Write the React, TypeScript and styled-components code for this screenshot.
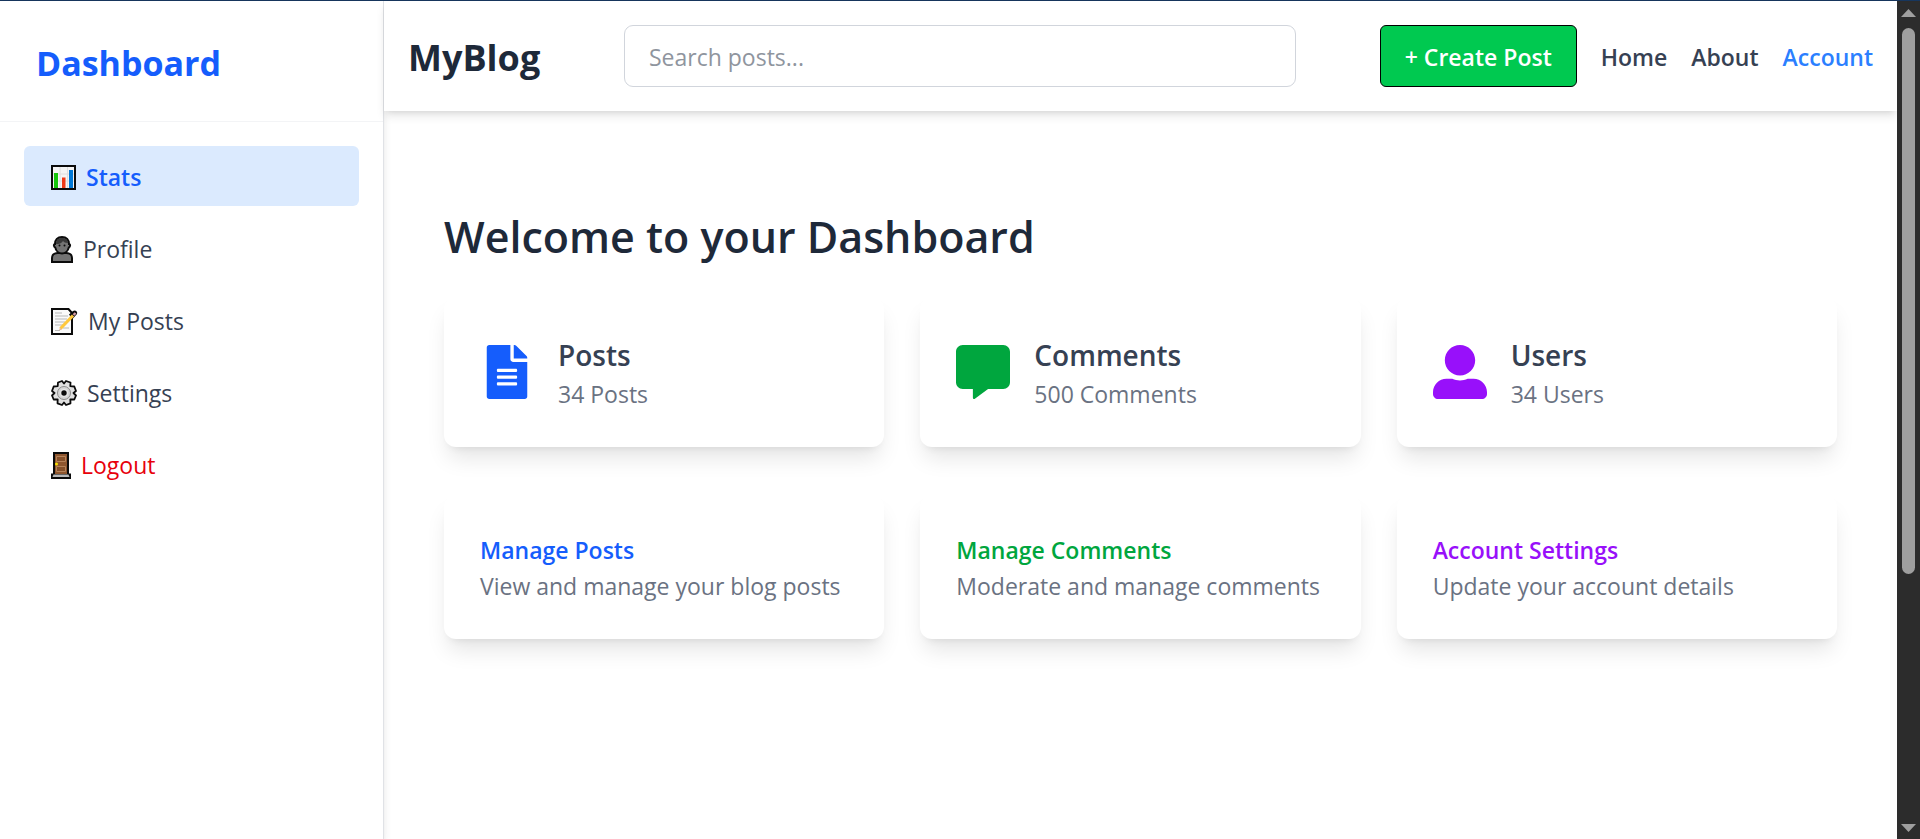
import React from "react";
import styled, { createGlobalStyle } from "styled-components";
import { FaCommentAlt, FaFileAlt, FaUserAlt } from "react-icons/fa";

const GlobalStyle = createGlobalStyle`
  *, *::before, *::after { box-sizing: border-box; }
  body {
    margin: 0;
    background: #fff;
    color: #1e2939;
    font-family: "Segoe UI", "Open Sans", "Noto Sans", sans-serif;
    font-size: 23px;
    line-height: 36px;
  }
  h1, h2, h3, p, ul { margin: 0; padding: 0; }
  a { color: inherit; text-decoration: none; }
`;

const Page = styled.div`
  display: flex;
  min-height: 100vh;
  border-top: 1px solid #17365d;
`;

const Sidebar = styled.aside`
  flex: 0 0 20%;
  background: #fff;
  border-right: 1px solid #e0e2e6;
  box-shadow: 0 6px 9px -1px rgba(0, 0, 0, 0.1), 0 3px 6px -3px rgba(0, 0, 0, 0.1);
`;

const SidebarTitle = styled.h2`
  padding: 38px 36px 34px;
  border-bottom: 1px solid #f3f4f6;
  color: #155dfc;
  font-size: 34px;
  font-weight: 700;
  line-height: 48px;
`;

const Menu = styled.ul`
  display: flex;
  flex-direction: column;
  gap: 12px;
  padding: 24px;
  list-style: none;
`;

const MenuLink = styled.a<{ $active?: boolean; $danger?: boolean }>`
  display: flex;
  align-items: center;
  gap: 10px;
  padding: 13px 27px 11px;
  border-radius: 6px;
  background: ${(p) => (p.$active ? "#dbeafe" : "transparent")};
  color: ${(p) => (p.$active ? "#155dfc" : p.$danger ? "#e7000b" : "#364153")};
  font-weight: ${(p) => (p.$active ? 600 : 400)};
  svg { flex: none; }
`;

const Main = styled.div`
  flex: 1;
  min-width: 0;
`;

const Header = styled.header`
  position: relative;
  display: flex;
  align-items: center;
  justify-content: space-between;
  gap: 24px;
  padding: 24px;
  background: #fff;
  box-shadow: 0 6px 9px -1px rgba(0, 0, 0, 0.1), 0 3px 6px -3px rgba(0, 0, 0, 0.1);
`;

const Brand = styled.a`
  padding-top: 4px;
  font-size: 36px;
  font-weight: 700;
`;

const Search = styled.input`
  flex: 0 1 672px;
  min-width: 0;
  height: 62px;
  padding: 2px 24px 0;
  border: 1px solid #d1d5dc;
  border-radius: 9px;
  background: #fff;
  color: #1e2939;
  font: inherit;
  &::placeholder { color: #8f959e; opacity: 1; }
`;

const Nav = styled.nav`
  display: flex;
  align-items: center;
  gap: 24px;
  font-weight: 600;
  white-space: nowrap;
`;

const CreateButton = styled.button`
  height: 62px;
  padding: 2px 24px 0;
  border: 1px solid #000;
  border-radius: 6px;
  background: #00c950;
  color: #fff;
  font: inherit;
  font-weight: 600;
`;

const NavLink = styled.a<{ $accent?: boolean }>`
  padding-top: 2px;
  color: ${(p) => (p.$accent ? "#2b7fff" : "#364153")};
`;

const Content = styled.main`
  display: flex;
  flex-direction: column;
  padding: 96px 60px 60px;
`;

const Heading = styled.h1`
  margin-bottom: 30px;
  font-size: 43px;
  font-weight: 600;
  line-height: 60px;
`;

const CardGrid = styled.section`
  display: grid;
  grid-template-columns: repeat(3, minmax(0, 1fr));
  gap: 36px;
  & + & { margin-top: 48px; }
`;

const Card = styled.article`
  display: flex;
  align-items: center;
  gap: 24px;
  padding: 36px;
  border-radius: 12px;
  background: #fff;
  box-shadow: 0 15px 22px -4px rgba(0, 0, 0, 0.1), 0 6px 9px -6px rgba(0, 0, 0, 0.1);
`;

const CardBody = styled.div`
  padding-top: 1px;
  margin-bottom: -1px;
`;

const CardIcon = styled.span<{ $color: string }>`
  display: flex;
  color: ${(p) => p.$color};
  font-size: 54px;
`;

const CardTitle = styled.h3`
  color: #364153;
  font-size: 28px;
  font-weight: 600;
  line-height: 42px;
`;

const CardLink = styled.a<{ $color: string }>`
  color: ${(p) => p.$color};
  font-weight: 600;
`;

const CardText = styled.p`
  color: #6a7282;
`;

const ScrollRail = styled.div`
  position: sticky;
  top: 0;
  display: flex;
  flex: 0 0 23px;
  flex-direction: column;
  align-items: center;
  justify-content: space-between;
  gap: 11px;
  height: calc(100vh - 1px);
  padding: 8px 0 7px;
  background: #2c2c2c;
  svg { display: block; flex: none; }
`;

const ScrollTrack = styled.div`
  display: grid;
  grid-template-rows: 16fr 7fr;
  flex: 1;
  width: 13px;
`;

const ScrollThumb = styled.div`
  border-radius: 7px;
  background: #9f9f9f;
`;

const ChartGlyph = () => (
  <svg width="25" height="25" viewBox="0 0 25 25" aria-hidden="true">
    <rect x="1" y="1" width="23" height="23" fill="#f5f5f5" stroke="#0b0b0b" strokeWidth="2" />
    <path d="M9 2v21M16.500 2v21M2 9h21M2 16h21" stroke="#dedede" />
    <rect x="3" y="8" width="4" height="15" fill="#16c60c" />
    <rect x="11" y="12.500" width="3.500" height="10.500" fill="#f03a17" />
    <rect x="18" y="5" width="4" height="18" fill="#0078d7" />
  </svg>
);

const PersonGlyph = () => (
  <svg width="22" height="27" viewBox="0 0 22 27" aria-hidden="true">
    <path d="M1 26v-4c0-3 2.500-5 5.500-5h9c3 0 5.500 2 5.500 5v4z" fill="#737373" stroke="#0b0b0b" strokeWidth="2" />
    <path d="M11 1C6.500 1 4 4 4 8c-1.500 0-1.500 3 .2 3.500C5 15 8 17.500 11 17.500s6-2.500 6.800-6C19.500 11 19.500 8 18 8c0-4-2.500-7-7-7z" fill="#737373" stroke="#0b0b0b" strokeWidth="2" />
    <path d="M5 8c0-4 2.500-6 6-6s6 2 6 5C14 7 13 6 12 5 10.500 7.500 8 8 5 8z" fill="#383838" />
    <circle cx="8.500" cy="9.500" r="1" fill="#0b0b0b" />
    <circle cx="13.500" cy="9.500" r="1" fill="#0b0b0b" />
  </svg>
);

const MemoGlyph = () => (
  <svg width="27" height="27" viewBox="0 0 27 27" aria-hidden="true">
    <path d="M1 1h16.500l3.500 4v21H1z" fill="#fafafa" stroke="#0b0b0b" strokeWidth="2" />
    <path d="M4 5h7M4 8h13M4 11h12M4 14h10M4 17h8M12 20h6M4 22.500h5" stroke="#b8b8b8" />
    <path d="M18 6.500 22 3c2-1.500 5 .5 4 3l-4.500 5" fill="#0b0b0b" />
    <path d="M9.500 20.500 22 7.500" stroke="#ffc83d" strokeWidth="3.200" />
    <path d="m8 22.500 1-3 2 2z" fill="#e8b89b" />
    <path d="m22.500 7 2-2" stroke="#d69ca5" strokeWidth="2.400" />
  </svg>
);

const GearGlyph = () => (
  <svg width="26" height="26" viewBox="0 0 26 26" aria-hidden="true">
    <path
      d="M7 2.500 11 1l2 2.500L15 1l4.500 1.500-.2 3.700 4 .3L25 11l-2.500 2L25 15.500 23.300 19.500l-4-.2.200 4L15 25l-2-2.500L11 25l-4.500-1.700.2-4-4 .2L1 15.500 3.500 13 1 11l1.700-4.500 4-.3z"
      fill="#e0e0e0"
      stroke="#0b0b0b"
      strokeWidth="1.800"
      strokeLinejoin="round"
    />
    <circle cx="13" cy="13" r="6.500" fill="#d6d6d6" stroke="#8c8c8c" />
    <circle cx="13" cy="13" r="4" fill="#e6e6e6" />
    <circle cx="13" cy="13" r="2.700" fill="#0b0b0b" />
  </svg>
);

const DoorGlyph = () => (
  <svg width="20" height="27" viewBox="0 0 20 27" aria-hidden="true">
    <path d="M2 0h16v21.500h2V27H0v-5.500h2z" fill="#0b0b0b" />
    <path d="M4 2h12v20H4z" fill="#8e562e" />
    <path d="M5.500 4.500h9v5h-9zM5.500 14.500h9v5h-9z" fill="#85502a" stroke="#b58258" />
    <path d="M2.500 22.500h15L18.500 25h-17z" fill="#b9b9b9" />
    <circle cx="5.500" cy="12" r="1.500" fill="#fce100" />
  </svg>
);

const menuItems = [
  { label: "Stats", Glyph: ChartGlyph, active: true },
  { label: "Profile", Glyph: PersonGlyph },
  { label: "My Posts", Glyph: MemoGlyph },
  { label: "Settings", Glyph: GearGlyph },
  { label: "Logout", Glyph: DoorGlyph, danger: true },
];

const stats = [
  { title: "Posts", text: "34 Posts", Icon: FaFileAlt, color: "#155dfc" },
  { title: "Comments", text: "500 Comments", Icon: FaCommentAlt, color: "#00a63e" },
  { title: "Users", text: "34 Users", Icon: FaUserAlt, color: "#9810fa" },
];

const actions = [
  { title: "Manage Posts", text: "View and manage your blog posts", color: "#155dfc" },
  { title: "Manage Comments", text: "Moderate and manage comments", color: "#00a63e" },
  { title: "Account Settings", text: "Update your account details", color: "#9810fa" },
];

export default function App() {
  return (
    <>
      <GlobalStyle />
      <Page>
        <Sidebar>
          <SidebarTitle>Dashboard</SidebarTitle>
          <Menu>
            {menuItems.map(({ label, Glyph, active, danger }) => (
              <li key={label}>
                <MenuLink href="#" $active={active} $danger={danger}>
                  <Glyph />
                  {label}
                </MenuLink>
              </li>
            ))}
          </Menu>
        </Sidebar>
        <Main>
          <Header>
            <Brand href="#">MyBlog</Brand>
            <Search type="search" placeholder="Search posts..." aria-label="Search posts" />
            <Nav>
              <CreateButton type="button">+ Create Post</CreateButton>
              <NavLink href="#">Home</NavLink>
              <NavLink href="#">About</NavLink>
              <NavLink href="#" $accent>Account</NavLink>
            </Nav>
          </Header>
          <Content>
            <Heading>Welcome to your Dashboard</Heading>
            <CardGrid>
              {stats.map(({ title, text, Icon, color }) => (
                <Card key={title}>
                  <CardIcon $color={color}><Icon /></CardIcon>
                  <CardBody>
                    <CardTitle>{title}</CardTitle>
                    <CardText>{text}</CardText>
                  </CardBody>
                </Card>
              ))}
            </CardGrid>
            <CardGrid>
              {actions.map(({ title, text, color }) => (
                <Card key={title}>
                  <CardBody>
                    <CardLink href="#" $color={color}>{title}</CardLink>
                    <CardText>{text}</CardText>
                  </CardBody>
                </Card>
              ))}
            </CardGrid>
          </Content>
        </Main>
        <ScrollRail aria-hidden="true">
          <svg width="15" height="8" viewBox="0 0 15 8"><path d="M7.500 0 15 8H0z" fill="#9f9f9f" /></svg>
          <ScrollTrack><ScrollThumb /></ScrollTrack>
          <svg width="15" height="8" viewBox="0 0 15 8"><path d="M0 0h15L7.500 8z" fill="#9f9f9f" /></svg>
        </ScrollRail>
      </Page>
    </>
  );
}
